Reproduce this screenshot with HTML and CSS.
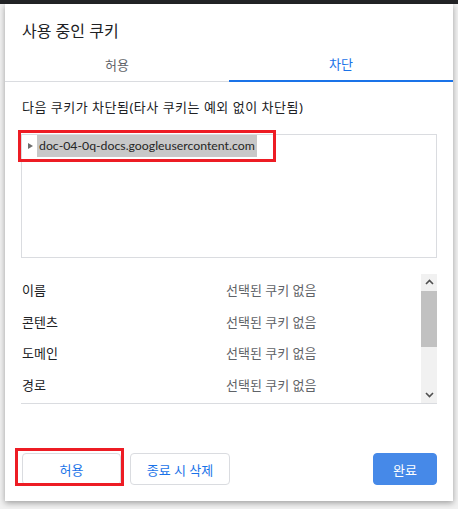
FILE: index.html
```html
<!DOCTYPE html>
<html lang="ko">
<head>
    <meta charset="UTF-8">
    <meta name="viewport" content="width=device-width, initial-scale=1.0">
    <title>사용 중인 쿠키</title>
    <link rel="stylesheet" href="styles.css">
</head>
<body>

<div class="top-bar"></div>

<div class="dialog">
    <h1 class="title">사용 중인 쿠키</h1>

    <div class="tabs">
        <div class="tab">허용</div>
        <div class="tab active">차단</div>
    </div>

    <div class="content">
        <p class="desc">다음 쿠키가 차단됨(타사 쿠키는 예외 없이 차단됨)</p>

        <div class="tree">
            <div class="tree-item">
                <span class="arrow"></span>
                <span class="host">doc-04-0q-docs.googleusercontent.com</span>
                <div class="mark mark-tree"></div>
            </div>
        </div>

        <div class="details">
            <div class="detail-rows">
                <div class="row"><span class="label">이름</span><span class="value">선택된 쿠키 없음</span></div>
                <div class="row"><span class="label">콘텐츠</span><span class="value">선택된 쿠키 없음</span></div>
                <div class="row"><span class="label">도메인</span><span class="value">선택된 쿠키 없음</span></div>
                <div class="row"><span class="label">경로</span><span class="value">선택된 쿠키 없음</span></div>
            </div>
            <div class="scrollbar">
                <div class="scroll-btn">
                    <svg width="9" height="6" viewBox="0 0 9 6"><path d="M1 5 L4.5 1.5 L8 5" fill="none" stroke="#505050" stroke-width="1.6"/></svg>
                </div>
                <div class="scroll-track"><div class="scroll-thumb"></div></div>
                <div class="scroll-btn">
                    <svg width="9" height="6" viewBox="0 0 9 6"><path d="M1 1 L4.5 4.5 L8 1" fill="none" stroke="#505050" stroke-width="1.6"/></svg>
                </div>
            </div>
        </div>
    </div>

    <div class="footer">
        <button class="btn allow">허용<span class="mark mark-btn"></span></button>
        <button class="btn">종료 시 삭제</button>
        <button class="btn primary">완료</button>
    </div>
</div>

</body>
</html>
```

FILE: styles.css
```css
:root {
    --text: #202124;
    --muted: #5f6368;
    --blue: #1a73e8;
    --line: #dadce0;
    --mark: #ed1c24;
}
body {
    margin: 0;
    padding: 0;
    width: 458px;
    height: 509px;
    overflow: hidden;
    background: #f1f1f1;
    font-family: "Noto Sans", "Noto Sans CJK KR", sans-serif;
    color: var(--text);
}
.top-bar {
    height: 4px;
    background: #232427;
}
.dialog {
    margin-left: 5px;
    width: 448px;
    height: 497px;
    background: #ffffff;
    box-shadow: 0 2px 6px rgba(0, 0, 0, 0.35);
    display: flex;
    flex-direction: column;
}
.title {
    margin: 0;
    padding: 17px 17px 0;
    font-size: 16px;
    font-weight: 400;
    line-height: 20px;
}
.tabs {
    margin-top: 8px;
    display: flex;
    border-bottom: 1px solid var(--line);
}
.tab {
    flex: 1;
    height: 32px;
    line-height: 32px;
    text-align: center;
    font-size: 13px;
    color: var(--muted);
}
.tab.active {
    color: var(--blue);
    height: 31px;
    line-height: 31px;
    border-bottom: 2px solid var(--blue);
    margin-bottom: -1px;
}
.content {
    padding: 0 16px 0 16px;
}
.desc {
    margin: 17px 0 0 1px;
    font-size: 13px;
    line-height: 16px;
    letter-spacing: 0.5px;
}
.tree {
    margin-top: 19px;
    height: 122px;
    border: 1px solid var(--line);
}
.tree-item {
    position: relative;
    display: flex;
    align-items: center;
    height: 22px;
    padding-left: 6px;
}
.arrow {
    width: 0;
    height: 0;
    border-top: 3.5px solid transparent;
    border-bottom: 3.5px solid transparent;
    border-left: 5px solid #6e6e6e;
    margin-right: 4px;
}
.host {
    background: #c8c8c8;
    height: 22px;
    line-height: 22px;
    padding: 0 2px 0 2px;
    font-family: Lato, sans-serif;
    font-size: 12.3px;
    color: #262626;
}
.mark {
    position: absolute;
    border: 3px solid var(--mark);
    pointer-events: none;
}
.mark-tree {
    left: -4px;
    top: -5px;
    width: 252px;
    height: 26px;
}
.details {
    margin-top: 16px;
    display: flex;
    height: 129px;
    border-bottom: 1px solid var(--line);
}
.detail-rows {
    flex: 1;
    overflow: hidden;
}
.row {
    display: flex;
    align-items: center;
    height: 31.5px;
    font-size: 13px;
    padding-left: 1px;
}
.label {
    width: 204px;
}
.value {
    color: var(--muted);
}
.scrollbar {
    width: 16px;
    background: #f1f1f1;
    display: flex;
    flex-direction: column;
}
.scroll-btn {
    height: 16px;
    display: flex;
    align-items: center;
    justify-content: center;
}
.scroll-track {
    flex: 1;
}
.scroll-thumb {
    margin-top: 1px;
    height: 56px;
    background: #c1c1c1;
}
.footer {
    margin-top: auto;
    padding: 0 16px 16px 17px;
    display: flex;
    align-items: center;
    gap: 9px;
}
.btn {
    position: relative;
    height: 32px;
    padding: 0 12px;
    font-family: "Noto Sans", "Noto Sans CJK KR", sans-serif;
    font-size: 13px;
    color: var(--blue);
    background: #ffffff;
    border: 1px solid var(--line);
    border-radius: 4px;
}
.btn.allow {
    width: 99px;
}
.btn.allow + .btn {
    width: 100px;
}
.btn.primary {
    margin-left: auto;
    width: 64px;
    background: #4689e8;
    border-color: #4689e8;
    color: #ffffff;
}
.mark-btn {
    left: -8px;
    top: -6px;
    width: 103px;
    height: 32px;
}
```
